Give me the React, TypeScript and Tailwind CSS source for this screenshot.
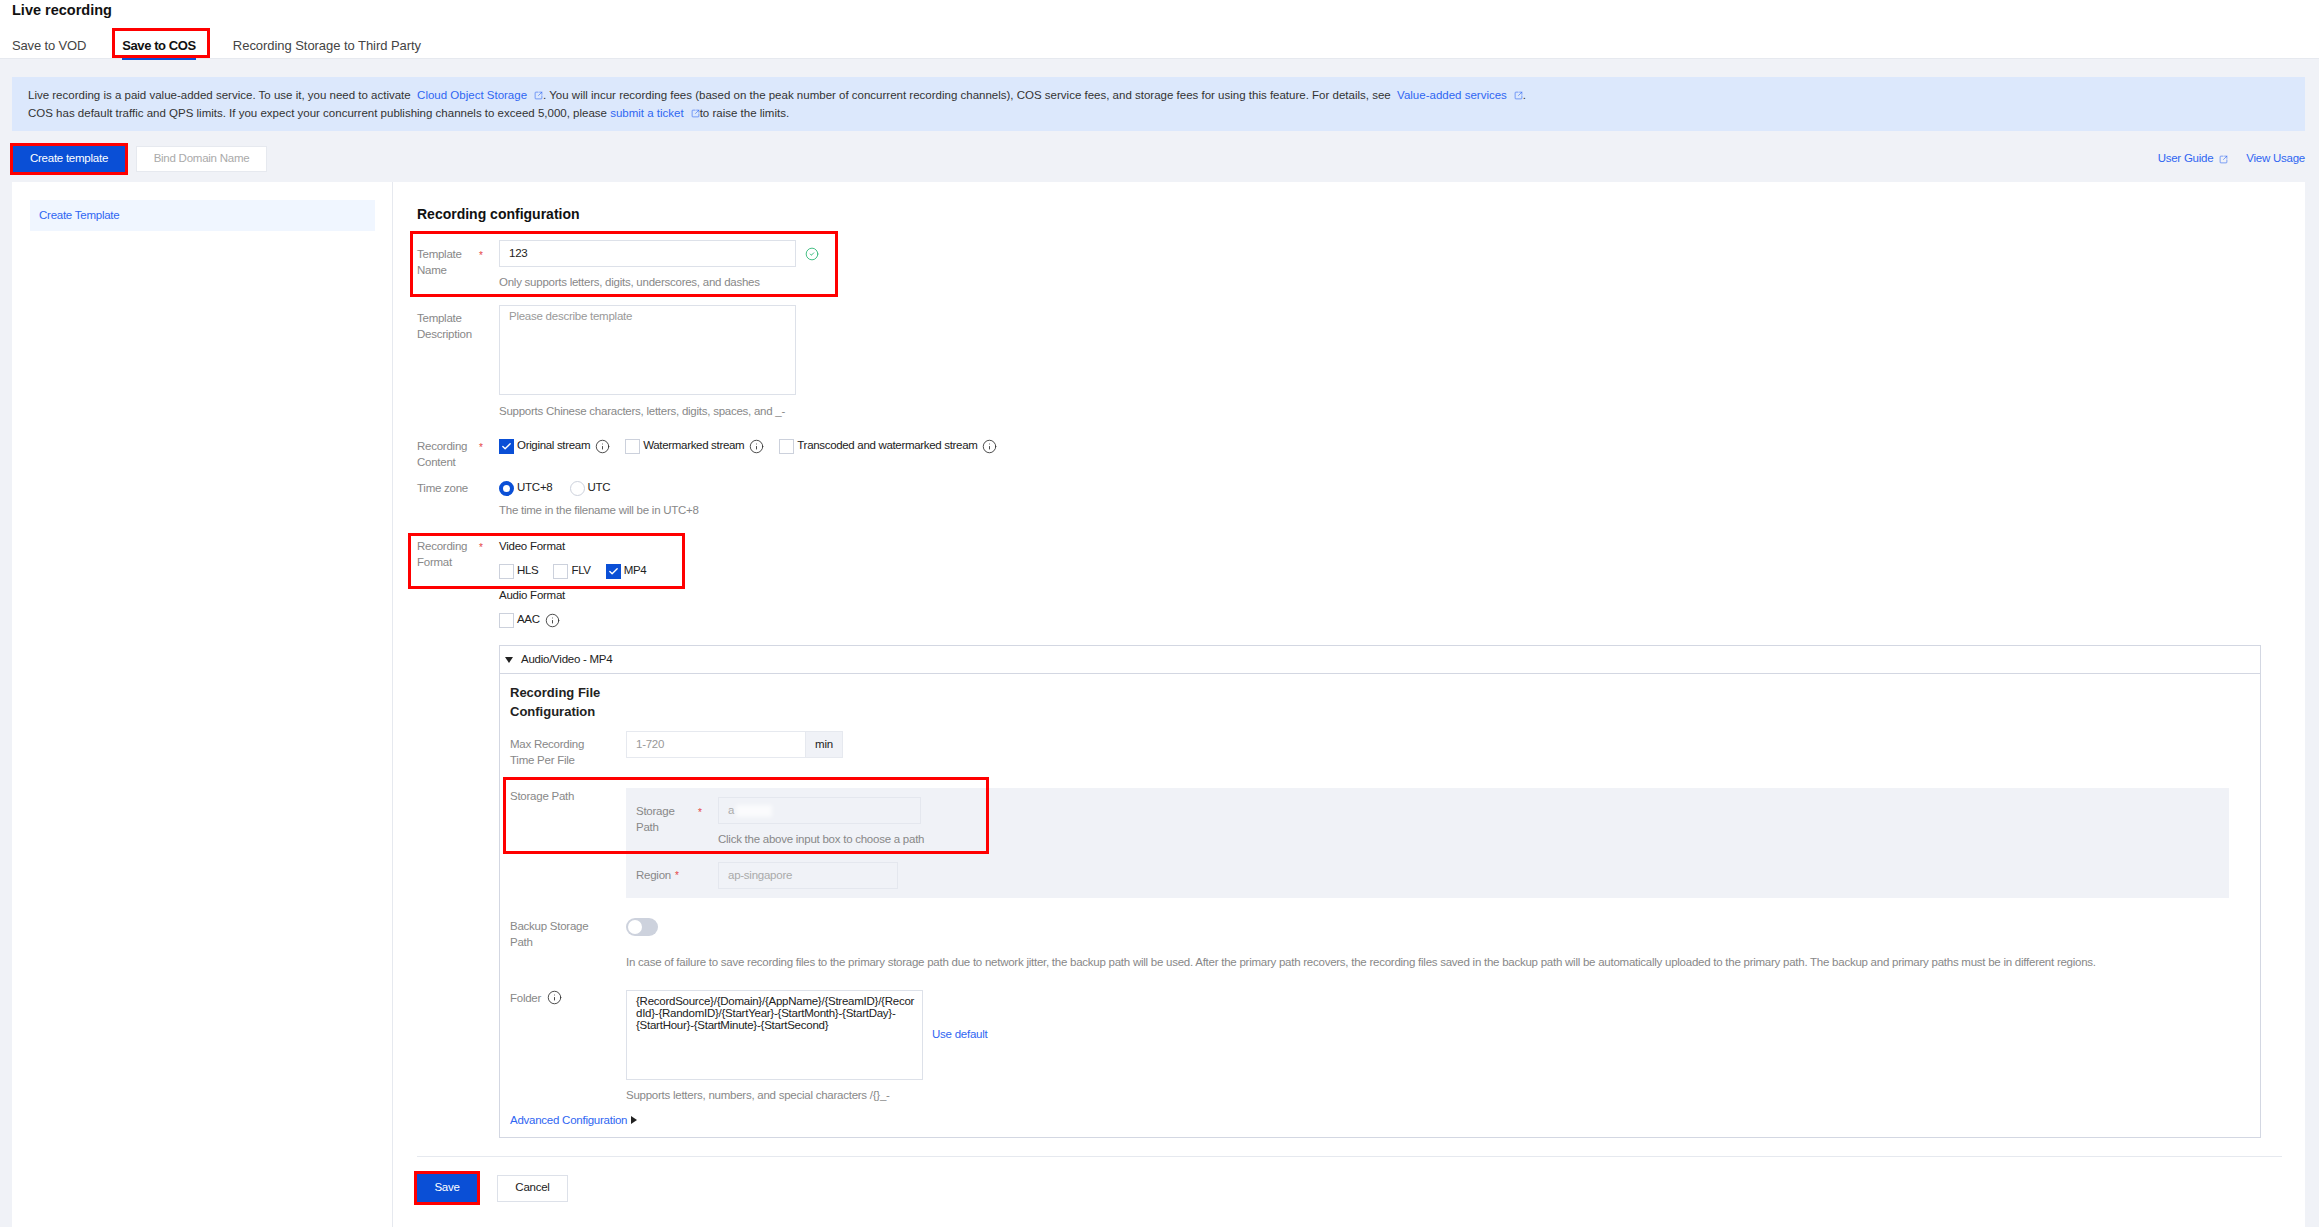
import React from 'react';
import { Check, SquareArrowOutUpRight, Info, CircleCheck } from 'lucide-react';

const Link = ({ children, ext }: { children: React.ReactNode; ext?: boolean }) => (
  <span className="inline-flex items-center text-[#2f66f2]">
    {children}
    {ext && <SquareArrowOutUpRight className="w-[9px] h-[9px] ml-[7px]" strokeWidth={1.6} />}
  </span>
);

const Tip = () => <Info className="w-[15px] h-[15px] text-[#333] shrink-0" strokeWidth={1.4} />;

const CheckBox = ({ label, checked, tip, className }: { label: string; checked?: boolean; tip?: boolean; className?: string }) => (
  <div className={`flex items-center ${className ?? ''}`}>
    <span
      className={`w-[15px] h-[15px] flex items-center justify-center border ${
        checked ? 'bg-[#0a4fd6] border-[#0a4fd6]' : 'bg-white border-[#ccd1dc]'
      }`}
    >
      {checked && <Check className="w-[11px] h-[11px] text-white" strokeWidth={3} />}
    </span>
    <span className="ml-[3px] text-[#222] tracking-[-0.32px]">{label}</span>
    {tip && <span className="ml-[5px]"><Tip /></span>}
  </div>
);

const Label = ({ lines, star, className }: { lines: string[]; star?: boolean; className?: string }) => (
  <div className={`shrink-0 text-[#888] leading-[16px] ${className ?? ''}`}>
    {lines.map((l, i) => (
      <div key={l} className="relative">
        {l}
        {star && i === 0 && <span className="absolute left-[62px] top-[2px] text-[10px] text-[#e54545]">*</span>}
      </div>
    ))}
  </div>
);

const Help = ({ children, className }: { children: React.ReactNode; className?: string }) => (
  <div className={`text-[#888] leading-[16px] ${className ?? ''}`}>{children}</div>
);

const App = () => {
  return (
    <div className="relative h-[1227px] overflow-hidden bg-[#f0f2f7] text-[11.5px] tracking-[-0.25px] font-['Liberation_Sans',sans-serif]">
      {/* header */}
      <div className="h-[59px] bg-white border-b border-[#e6e9ef] px-[12px]">
        <div className="pt-[1px] text-[14.5px] tracking-normal leading-[18px] font-bold text-[#111]">Live recording</div>
        <div className="flex mt-[18px] text-[13px] tracking-normal leading-[18px] text-[#444]">
          <span className="tracking-[-0.15px]">Save to VOD</span>
          <span className="ml-[36px] font-bold tracking-[-0.4px] text-[#111] relative">
            Save to COS
            <span className="absolute left-0 right-0 top-[21px] h-[2px] bg-[#0a4fd6]" />
          </span>
          <span className="ml-[37px] tracking-[-0.05px]">Recording Storage to Third Party</span>
        </div>
      </div>

      <div className="pl-[12px] pr-[14px]">
        {/* notice */}
        <div className="mt-[18px] h-[54px] bg-[#dce8fc] px-[16px] py-[9px] leading-[18px] tracking-normal text-[#333]">
          <div className="flex items-center whitespace-pre">
            Live recording is a paid value-added service. To use it, you need to activate{'  '}
            <Link ext>Cloud Object Storage</Link>
            . You will incur recording fees (based on the peak number of concurrent recording channels), COS service fees, and storage fees for using this feature. For details, see{'  '}
            <Link ext>Value-added services</Link>
            {' '}.
          </div>
          <div className="flex items-center whitespace-pre">
            COS has default traffic and QPS limits. If you expect your concurrent publishing channels to exceed 5,000, please{' '}
            <Link ext>submit a ticket</Link>
            {' '}to raise the limits.
          </div>
        </div>

        {/* toolbar */}
        <div className="flex items-center mt-[14px] h-[28px] mb-[9px]">
          <button className="w-[114px] h-[28px] bg-[#0a4fd6] text-white">Create template</button>
          <button className="ml-[10px] w-[131px] h-[26px] bg-white border border-[#e6e9ef] text-[#aaa]">Bind Domain Name</button>
          <div className="ml-auto flex items-center">
            <Link>User Guide</Link>
            <SquareArrowOutUpRight className="w-[9px] h-[9px] ml-[6px] text-[#2f66f2]" strokeWidth={1.6} />
            <span className="ml-[18px]"><Link>View Usage</Link></span>
          </div>
        </div>

        {/* card */}
        <div className="flex h-[1050px] bg-white">
          <div className="w-[381px] shrink-0 border-r border-[#e6e9ef] pl-[18px] pr-[17px] pt-[18px]">
            <div className="h-[31px] bg-[#f0f6ff] pl-[9px] leading-[30px] text-[#2f66f2]">Create Template</div>
          </div>

          <div className="flex-1 pl-[24px] pr-[23px]">
            <div className="mt-[23px] text-[14px] tracking-normal leading-[18px] font-bold text-[#111]">Recording configuration</div>

            {/* template name */}
            <div className="flex mt-[17px]">
              <Label lines={['Template', 'Name']} star className="w-[82px] pt-[6px]" />
              <div>
                <div className="flex items-center">
                  <div className="w-[297px] h-[27px] border border-[#dde1e9] pl-[9px] leading-[25px] text-[#222]">123</div>
                  <CircleCheck className="w-[14px] h-[14px] ml-[9px] text-[#2bb673]" strokeWidth={1.5} />
                </div>
                <Help className="mt-[7px]">Only supports letters, digits, underscores, and dashes</Help>
              </div>
            </div>

            {/* description */}
            <div className="flex mt-[15px]">
              <Label lines={['Template', 'Description']} className="w-[82px] pt-[5px]" />
              <div>
                <div className="w-[297px] h-[90px] border border-[#dde1e9] pl-[9px] pt-[1px] leading-[18px] text-[#999]">Please describe template</div>
                <Help className="mt-[8px]">Supports Chinese characters, letters, digits, spaces, and _-</Help>
              </div>
            </div>

            {/* content */}
            <div className="flex mt-[20px]">
              <Label lines={['Recording', 'Content']} star className="w-[82px] mt-[-1px]" />
              <div className="flex h-[16px] mt-[-1px]">
                <CheckBox label="Original stream" checked tip />
                <CheckBox label="Watermarked stream" tip className="ml-[15px]" />
                <CheckBox label="Transcoded and watermarked stream" tip className="ml-[15px]" />
              </div>
            </div>

            {/* time zone */}
            <div className="flex mt-[11px]">
              <Label lines={['Time zone']} className="w-[82px] mt-[-1px]" />
              <div>
                <div className="flex items-center h-[16px] mt-[-1px] text-[#222]">
                  <span className="w-[15px] h-[15px] rounded-full border-[4px] border-[#0a4fd6] bg-white" />
                  <span className="ml-[3px]">UTC+8</span>
                  <span className="ml-[17px] w-[15px] h-[15px] rounded-full border border-[#ccd1dc] bg-white" />
                  <span className="ml-[3px]">UTC</span>
                </div>
                <Help className="mt-[6px]">The time in the filename will be in UTC+8</Help>
              </div>
            </div>

            {/* recording format */}
            <div className="flex mt-[20px]">
              <Label lines={['Recording', 'Format']} star className="w-[82px]" />
              <div className="flex-1 min-w-0">
                <div className="leading-[16px] text-[#222]">Video Format</div>
                <div className="flex mt-[9px] h-[16px]">
                  <CheckBox label="HLS" />
                  <CheckBox label="FLV" className="ml-[15px]" />
                  <CheckBox label="MP4" checked className="ml-[15px]" />
                </div>
                <div className="mt-[8px] leading-[16px] text-[#222]">Audio Format</div>
                <div className="flex mt-[9px] h-[16px]">
                  <CheckBox label="AAC" tip />
                </div>

                {/* mp4 panel */}
                <div className="mt-[17px] w-[1762px] h-[493px] border border-[#d3d7e2]">
                  <div className="h-[28px] border-b border-[#d3d7e2] flex items-center pl-[5px] text-[#222]">
                    <span className="w-0 h-0 border-x-[4px] border-x-transparent border-t-[6px] border-t-[#222]" />
                    <span className="ml-[8px]">Audio/Video - MP4</span>
                  </div>
                  <div className="pl-[10px] pr-[31px]">
                    <div className="mt-[9px] w-[100px] text-[13px] tracking-normal leading-[19px] font-bold text-[#222]">Recording File Configuration</div>

                    <div className="flex mt-[10px]">
                      <Label lines={['Max Recording', 'Time Per File']} className="w-[116px] pt-[5px]" />
                      <div className="flex h-[27px]">
                        <div className="w-[180px] border border-[#e6e9ef] pl-[9px] leading-[25px] text-[#999]">1-720</div>
                        <div className="w-[37px] bg-[#f0f2f7] border border-[#e6e9ef] border-l-0 text-center leading-[25px] text-[#222]">min</div>
                      </div>
                    </div>

                    {/* storage path */}
                    <div className="flex mt-[20px]">
                      <Label lines={['Storage Path']} className="w-[116px]" />
                      <div className="flex-1 h-[110px] bg-[#f0f2f7] pl-[10px] pt-[9px]">
                        <div className="flex">
                          <Label lines={['Storage', 'Path']} star className="w-[82px] pt-[6px]" />
                          <div>
                            <div className="w-[203px] h-[27px] border border-[#e4e7ee] pl-[9px] flex items-center text-[#aaa]">
                              a
                              <span className="ml-[2px] w-[36px] h-[12px] bg-white/70 blur-[2px]" />
                            </div>
                            <Help className="mt-[7px]">Click the above input box to choose a path</Help>
                          </div>
                        </div>
                        <div className="flex mt-[15px] items-center">
                          <div className="w-[82px] relative text-[#888]">
                            Region<span className="absolute left-[39px] top-[1px] text-[10px] text-[#e54545]">*</span>
                          </div>
                          <div className="w-[180px] h-[27px] border border-[#e4e7ee] pl-[9px] leading-[25px] text-[#aaa]">ap-singapore</div>
                        </div>
                      </div>
                    </div>

                    {/* backup */}
                    <div className="flex mt-[20px]">
                      <Label lines={['Backup Storage', 'Path']} className="w-[116px]" />
                      <div>
                        <div className="w-[32px] h-[18px] rounded-full bg-[#cdd2dd] p-[2px]">
                          <div className="w-[14px] h-[14px] rounded-full bg-white" />
                        </div>
                        <Help className="mt-[18px] whitespace-nowrap">
                          In case of failure to save recording files to the primary storage path due to network jitter, the backup path will be used. After the primary path recovers, the recording files saved in the backup path will be automatically uploaded to the primary path. The backup and primary paths must be in different regions.
                        </Help>
                      </div>
                    </div>

                    {/* folder */}
                    <div className="flex mt-[20px]">
                      <div className="w-[116px] shrink-0 flex items-start text-[#888] leading-[16px]">
                        Folder
                        <span className="ml-[6px]"><Tip /></span>
                      </div>
                      <div>
                        <div className="flex items-center">
                          <div className="w-[297px] h-[90px] border border-[#dde1e9] px-[9px] pt-[4px] leading-[12px] text-[#222] whitespace-nowrap">
                            <div>{'{RecordSource}/{Domain}/{AppName}/{StreamID}/{Recor'}</div>
                            <div>{'dId}-{RandomID}/{StartYear}-{StartMonth}-{StartDay}-'}</div>
                            <div>{'{StartHour}-{StartMinute}-{StartSecond}'}</div>
                          </div>
                          <span className="ml-[9px]"><Link>Use default</Link></span>
                        </div>
                        <Help className="mt-[7px]">{'Supports letters, numbers, and special characters /{}_-'}</Help>
                      </div>
                    </div>

                    <div className="flex items-center mt-[9px] leading-[16px] text-[#2f66f2]">
                      Advanced Configuration
                      <span className="ml-[4px] w-0 h-0 border-y-[4px] border-y-transparent border-l-[6px] border-l-[#222]" />
                    </div>
                  </div>
                </div>
              </div>
            </div>

            <div className="mt-[18px] border-t border-[#e6e9ef]" />
            <div className="flex items-center mt-[17px]">
              <button className="w-[60px] h-[28px] bg-[#0a4fd6] text-white">Save</button>
              <button className="ml-[20px] w-[71px] h-[27px] border border-[#dde1e9] text-[#222]">Cancel</button>
            </div>
          </div>
        </div>
      </div>

      {/* red annotations */}
      <div className="absolute left-[112px] top-[28px] w-[98px] h-[30px] border-[3px] border-[#f00]" />
      <div className="absolute left-[10px] top-[143px] w-[118px] h-[32px] border-[3px] border-[#f00]" />
      <div className="absolute left-[410px] top-[231px] w-[428px] h-[66px] border-[3px] border-[#f00]" />
      <div className="absolute left-[408px] top-[533px] w-[277px] h-[56px] border-[3px] border-[#f00]" />
      <div className="absolute left-[503px] top-[777px] w-[486px] h-[77px] border-[3px] border-[#f00]" />
      <div className="absolute left-[414px] top-[1171px] w-[66px] h-[34px] border-[3px] border-[#f00]" />
    </div>
  );
};

export default App;
